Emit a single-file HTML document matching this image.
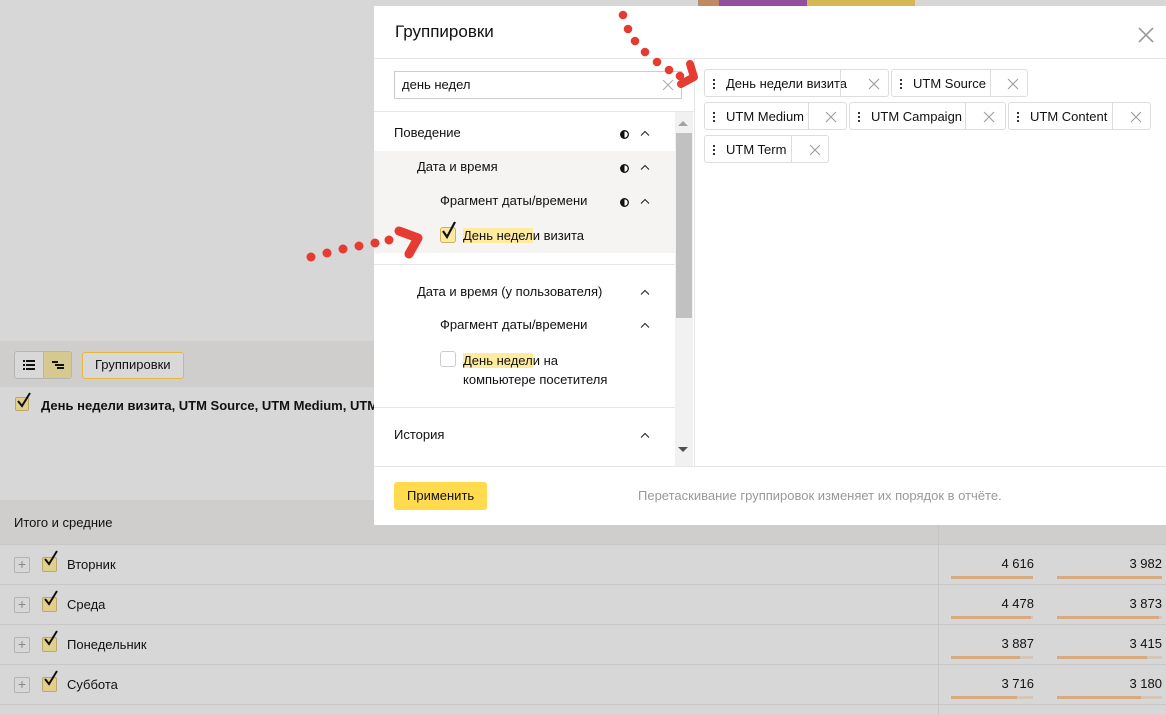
<!DOCTYPE html>
<html><head><meta charset="utf-8"><style>
*{box-sizing:border-box;margin:0;padding:0}
body{width:1166px;height:715px;overflow:hidden;background:#d7d7d7;font-family:"Liberation Sans","DejaVu Sans",sans-serif;font-size:13px;color:#111;position:relative}
.a{position:absolute}
.t{position:absolute;white-space:nowrap;line-height:16px}
.hl{background:#ffeba0}
.cb{position:absolute;width:15px;height:15px;border:1px solid #b9a86a;background:#e0d08e;border-radius:2px}
.chk{position:absolute;width:18px;height:20px}
.chip{position:absolute;height:28px;border:1px solid #ddd;border-radius:3px;background:#fff}
.chip .d{position:absolute;left:8px;top:8px;width:2px;height:11px;background:radial-gradient(circle,#222 1px,transparent 1.2px) 0 0/2px 4px}
.chip .l{position:absolute;left:21px;top:6px;white-space:nowrap}
.chip .s{position:absolute;top:0;bottom:0;border-left:1px solid #ddd}
.x{position:absolute;width:12px;height:12px}
.row{position:absolute;left:0;width:1166px;height:40px;border-bottom:1px solid #c6c6c6}
.pl{position:absolute;left:14px;top:12px;width:16px;height:16px;border:1px solid #b3b3b3;border-radius:2px;color:#888;font-size:14px;line-height:13px;text-align:center}
.num{position:absolute;text-align:right;top:11px}
.bar{position:absolute;height:3px;top:31px;background:#d2c7b8}
.bar i{display:block;height:3px;background:#d7aa80}
</style></head><body>
<div class="a" style="left:698px;top:0;width:24px;height:6px;background:#bf8b64"></div>
<div class="a" style="left:719px;top:0;width:88px;height:6px;background:#924f9c"></div>
<div class="a" style="left:807px;top:0;width:108px;height:6px;background:#d7b654"></div>

<div class="a" style="left:0;top:341px;width:1166px;height:46px;background:#cfcecc"></div>
<div class="a" style="left:14px;top:351px;width:58px;height:28px;border:1px solid #b5b5b5;border-radius:3px;background:#d8d8d8;overflow:hidden">
 <div class="a" style="left:28px;top:0;width:29px;height:26px;background:#d6c98f;border-left:1px solid #b5b5b5"></div>
 <svg class="a" style="left:8px;top:8px" width="12" height="10"><g fill="#111"><rect x="0" y="0" width="2" height="2"/><rect x="3" y="0" width="9" height="2"/><rect x="0" y="4" width="2" height="2"/><rect x="3" y="4" width="9" height="2"/><rect x="0" y="8" width="2" height="2"/><rect x="3" y="8" width="9" height="2"/></g></svg>
 <svg class="a" style="left:37px;top:9px" width="12" height="9"><g fill="#111"><rect x="0" y="0" width="6" height="2"/><rect x="3" y="3" width="9" height="2"/><rect x="5" y="6" width="7" height="2"/></g></svg>
</div>
<div class="a" style="left:82px;top:352px;width:102px;height:27px;border:1px solid #e2b93b;border-radius:3px;background:#d8d8d8"></div>
<div class="t" style="left:95px;top:357px">Группировки</div>

<div class="cb" style="left:15px;top:397px;width:14px;height:14px"></div>
<svg class="chk" style="left:16px;top:391px" width="16" height="18"><path d="M2,10 L6,15 L14,2" fill="none" stroke="#111" stroke-width="2"/></svg>
<div class="t" style="left:41px;top:398px;font-weight:bold;font-size:13px">День недели визита, UTM Source, UTM Medium, UTM C</div>

<div class="a" style="left:0;top:500px;width:1166px;height:45px;background:#cfcecc;border-bottom:1px solid #c6c6c6"></div>
<div class="t" style="left:14px;top:515px">Итого и средние</div>
<div class="a" style="left:938px;top:500px;width:1px;height:215px;background:#c6c6c6"></div>

<div class="row" style="top:545px"><div class="pl">+</div><div class="cb" style="left:42px;top:12px"></div><svg class="chk" style="left:43px;top:4px" width="16" height="18"><path d="M2,10 L6,15 L14,2" fill="none" stroke="#111" stroke-width="2"/></svg><div class="t" style="left:67px;top:12px">Вторник</div>
<div class="num" style="left:951px;width:83px">4 616</div><div class="num" style="left:1057px;width:105px">3 982</div>
<div class="bar" style="left:951px;width:82px"><i style="width:100%"></i></div><div class="bar" style="left:1057px;width:105px"><i style="width:100%"></i></div></div>
<div class="row" style="top:585px"><div class="pl">+</div><div class="cb" style="left:42px;top:12px"></div><svg class="chk" style="left:43px;top:4px" width="16" height="18"><path d="M2,10 L6,15 L14,2" fill="none" stroke="#111" stroke-width="2"/></svg><div class="t" style="left:67px;top:12px">Среда</div>
<div class="num" style="left:951px;width:83px">4 478</div><div class="num" style="left:1057px;width:105px">3 873</div>
<div class="bar" style="left:951px;width:82px"><i style="width:97%"></i></div><div class="bar" style="left:1057px;width:105px"><i style="width:97%"></i></div></div>
<div class="row" style="top:625px"><div class="pl">+</div><div class="cb" style="left:42px;top:12px"></div><svg class="chk" style="left:43px;top:4px" width="16" height="18"><path d="M2,10 L6,15 L14,2" fill="none" stroke="#111" stroke-width="2"/></svg><div class="t" style="left:67px;top:12px">Понедельник</div>
<div class="num" style="left:951px;width:83px">3 887</div><div class="num" style="left:1057px;width:105px">3 415</div>
<div class="bar" style="left:951px;width:82px"><i style="width:84%"></i></div><div class="bar" style="left:1057px;width:105px"><i style="width:86%"></i></div></div>
<div class="row" style="top:665px"><div class="pl">+</div><div class="cb" style="left:42px;top:12px"></div><svg class="chk" style="left:43px;top:4px" width="16" height="18"><path d="M2,10 L6,15 L14,2" fill="none" stroke="#111" stroke-width="2"/></svg><div class="t" style="left:67px;top:12px">Суббота</div>
<div class="num" style="left:951px;width:83px">3 716</div><div class="num" style="left:1057px;width:105px">3 180</div>
<div class="bar" style="left:951px;width:82px"><i style="width:81%"></i></div><div class="bar" style="left:1057px;width:105px"><i style="width:80%"></i></div></div>

<div class="a" style="left:374px;top:6px;width:792px;height:519px;background:#fff">
 <div class="t" style="left:21px;top:16px;font-size:17px;line-height:20px">Группировки</div>
 <svg class="a" style="left:764px;top:21px" width="16" height="16"><path d="M1,1 L15,15 M15,1 L1,15" stroke="#999" stroke-width="1.6"/></svg>
 <div class="a" style="left:0;top:52px;width:792px;height:1px;background:#e6e6e6"></div>
 <div class="a" style="left:20px;top:65px;width:288px;height:28px;border:1px solid #ccc"></div>
 <div class="t" style="left:28px;top:71px">день недел</div>
 <svg class="a" style="left:288px;top:73px" width="12" height="12"><path d="M1,1 L11,11 M11,1 L1,11" stroke="#aaa" stroke-width="1"/></svg>
 <div class="a" style="left:0;top:105px;width:320px;height:1px;background:#e6e6e6"></div>
 <div class="a" style="left:320px;top:52px;width:1px;height:408px;background:#e6e6e6"></div>
 <div class="a" style="left:301px;top:106px;width:18px;height:354px;background:#f1f1f1"></div>
 <div class="a" style="left:302px;top:127px;width:16px;height:185px;background:#c1c1c1"></div>
 <svg class="a" style="left:304px;top:114px" width="10" height="6"><path d="M0,6 L5,1 L10,6Z" fill="#a3a3a3"/></svg>
 <svg class="a" style="left:304px;top:441px" width="10" height="6"><path d="M0,0 L5,5 L10,0Z" fill="#505050"/></svg>
 <div class="a" style="left:0;top:145px;width:301px;height:102px;background:#f5f4f2"></div>
 <div class="t" style="left:20px;top:119px">Поведение</div>
 <div class="t" style="left:43px;top:153px">Дата и время</div>
 <div class="t" style="left:66px;top:187px">Фрагмент даты/времени</div>
 <svg class="a" style="left:246px;top:124px" width="9" height="9"><circle cx="4.5" cy="4.5" r="3.8" fill="#fff" stroke="#111" stroke-width="1.3"/><path d="M4.5,0.7 A3.8,3.8 0 0 0 4.5,8.3Z" fill="#111"/></svg>
 <svg class="a" style="left:246px;top:158px" width="9" height="9"><circle cx="4.5" cy="4.5" r="3.8" fill="#fff" stroke="#111" stroke-width="1.3"/><path d="M4.5,0.7 A3.8,3.8 0 0 0 4.5,8.3Z" fill="#111"/></svg>
 <svg class="a" style="left:246px;top:192px" width="9" height="9"><circle cx="4.5" cy="4.5" r="3.8" fill="#fff" stroke="#111" stroke-width="1.3"/><path d="M4.5,0.7 A3.8,3.8 0 0 0 4.5,8.3Z" fill="#111"/></svg>
 <svg class="a" style="left:266px;top:124px" width="10" height="6"><path d="M1,5.5 L5,1.5 L9,5.5" fill="none" stroke="#222" stroke-width="1.1"/></svg>
 <svg class="a" style="left:266px;top:158px" width="10" height="6"><path d="M1,5.5 L5,1.5 L9,5.5" fill="none" stroke="#222" stroke-width="1.1"/></svg>
 <svg class="a" style="left:266px;top:192px" width="10" height="6"><path d="M1,5.5 L5,1.5 L9,5.5" fill="none" stroke="#222" stroke-width="1.1"/></svg>
 <svg class="a" style="left:266px;top:283px" width="10" height="6"><path d="M1,5.5 L5,1.5 L9,5.5" fill="none" stroke="#222" stroke-width="1.1"/></svg>
 <svg class="a" style="left:266px;top:316px" width="10" height="6"><path d="M1,5.5 L5,1.5 L9,5.5" fill="none" stroke="#222" stroke-width="1.1"/></svg>
 <svg class="a" style="left:266px;top:426px" width="10" height="6"><path d="M1,5.5 L5,1.5 L9,5.5" fill="none" stroke="#222" stroke-width="1.1"/></svg>
 <div class="a" style="left:66px;top:221px;width:16px;height:16px;border:1px solid #c9b35c;background:#ffe8a0;border-radius:3px"></div>
 <svg class="a" style="left:67px;top:214px" width="16" height="20"><path d="M2,11 L6,17 L14,2" fill="none" stroke="#111" stroke-width="2.2"/></svg>
 <div class="t" style="left:89px;top:222px"><span class="hl">День недел</span>и визита</div>
 <div class="a" style="left:0;top:258px;width:301px;height:1px;background:#e6e6e6"></div>
 <div class="t" style="left:43px;top:278px">Дата и время (у пользователя)</div>
 <div class="t" style="left:66px;top:311px">Фрагмент даты/времени</div>
 <div class="a" style="left:66px;top:345px;width:16px;height:16px;border:1px solid #ccc;border-radius:3px;background:#fff"></div>
 <div class="t" style="left:89px;top:345px;line-height:19px"><span class="hl">День недел</span>и на<br>компьютере посетителя</div>
 <div class="a" style="left:0;top:401px;width:301px;height:1px;background:#e6e6e6"></div>
 <div class="t" style="left:20px;top:421px">История</div>
 <div class="a" style="left:0;top:460px;width:792px;height:1px;background:#e6e6e6"></div>
 <div class="a" style="left:20px;top:476px;width:93px;height:28px;background:#ffdb4d;border-radius:3px"></div>
 <div class="t" style="left:33px;top:482px">Применить</div>
 <div class="t" style="left:264px;top:482px;color:#999">Перетаскивание группировок изменяет их порядок в отчёте.</div>
 <div class="chip" style="left:330px;top:63px;width:185px"><i class="d"></i><span class="l">День недели визита</span><i class="s" style="left:135px"></i><svg class="x" style="left:163px;top:8px"><path d="M1,1 L11,11 M11,1 L1,11" stroke="#999"/></svg></div>
 <div class="chip" style="left:517px;top:63px;width:137px"><i class="d"></i><span class="l">UTM Source</span><i class="s" style="left:98px"></i><svg class="x" style="left:115px;top:8px"><path d="M1,1 L11,11 M11,1 L1,11" stroke="#999"/></svg></div>
 <div class="chip" style="left:330px;top:96px;width:143px"><i class="d"></i><span class="l">UTM Medium</span><i class="s" style="left:103px"></i><svg class="x" style="left:120px;top:8px"><path d="M1,1 L11,11 M11,1 L1,11" stroke="#999"/></svg></div>
 <div class="chip" style="left:475px;top:96px;width:157px"><i class="d"></i><span class="l">UTM Campaign</span><i class="s" style="left:115px"></i><svg class="x" style="left:133px;top:8px"><path d="M1,1 L11,11 M11,1 L1,11" stroke="#999"/></svg></div>
 <div class="chip" style="left:634px;top:96px;width:143px"><i class="d"></i><span class="l">UTM Content</span><i class="s" style="left:103px"></i><svg class="x" style="left:121px;top:8px"><path d="M1,1 L11,11 M11,1 L1,11" stroke="#999"/></svg></div>
 <div class="chip" style="left:330px;top:129px;width:125px"><i class="d"></i><span class="l">UTM Term</span><i class="s" style="left:86px"></i><svg class="x" style="left:104px;top:8px"><path d="M1,1 L11,11 M11,1 L1,11" stroke="#999"/></svg></div>
</div>

<svg class="a" style="left:0;top:0" width="1166" height="715">
 <g fill="#e53b30">
  <circle cx="623" cy="15" r="4.3"/><circle cx="628" cy="29" r="4.3"/><circle cx="635" cy="41" r="4.3"/><circle cx="645" cy="52" r="4.3"/><circle cx="657" cy="62" r="4.3"/><circle cx="669" cy="70" r="4.3"/><circle cx="680" cy="76" r="4.3"/>
  <circle cx="311" cy="257" r="4.5"/><circle cx="327" cy="253" r="4.5"/><circle cx="343" cy="249" r="4.5"/><circle cx="359" cy="246" r="4.5"/><circle cx="375" cy="243" r="4.5"/><circle cx="389" cy="240" r="4.5"/>
 </g>
 <path d="M690,64 L694,77 L681,84" fill="none" stroke="#e53b30" stroke-width="8" stroke-linecap="round" stroke-linejoin="round"/>
 <path d="M399,231 L418,238 L409,254" fill="none" stroke="#e53b30" stroke-width="9" stroke-linecap="round" stroke-linejoin="round"/>
</svg>
</body></html>
